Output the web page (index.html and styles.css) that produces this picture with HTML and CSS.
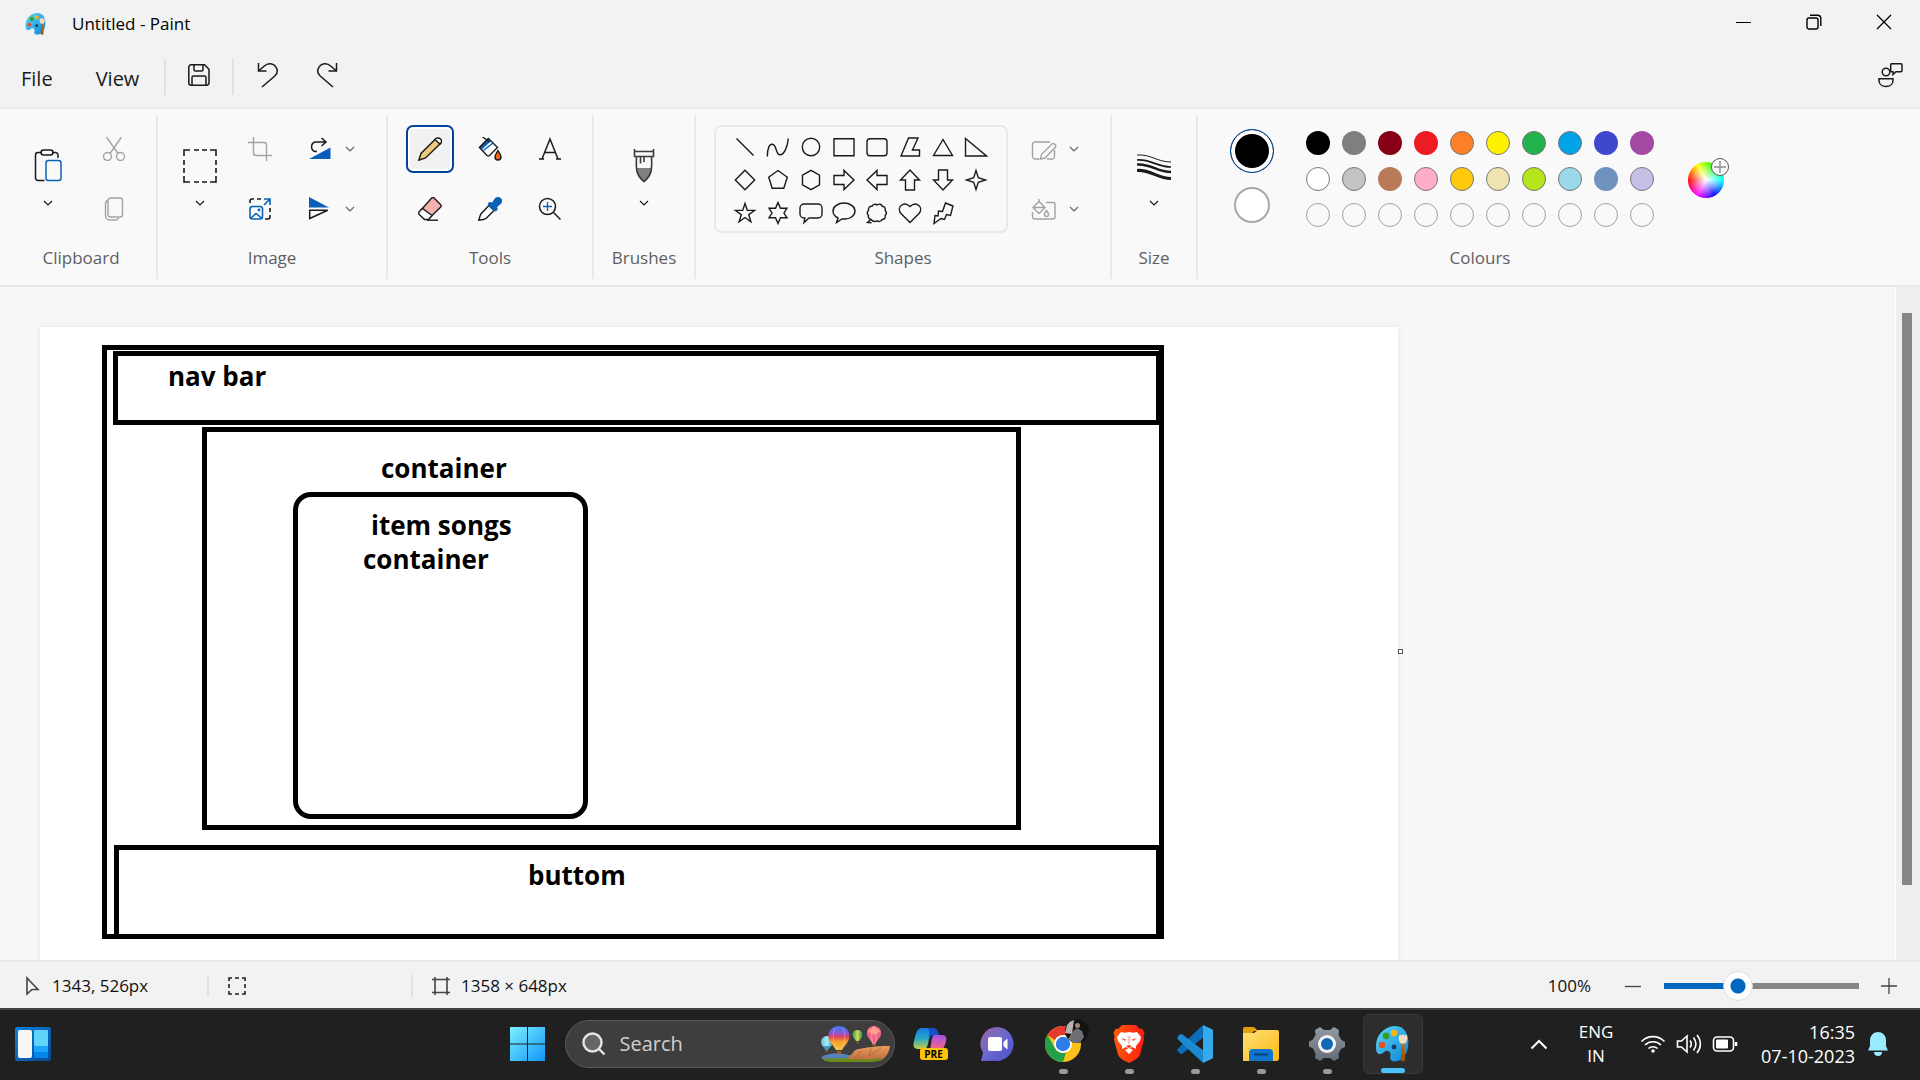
FILE: index.html
```html
<!DOCTYPE html>
<html lang="en-GB">
<head>
<meta charset="utf-8">
<title>Untitled - Paint</title>
<link rel="stylesheet" href="styles.css">
</head>
<body>
<svg class="defs" aria-hidden="true">
  <defs>
    <symbol id="chev" viewBox="0 0 10 8"><path d="M1 2l4 4 4-4" fill="none" stroke="currentColor" stroke-width="1.2"/></symbol>
    <linearGradient id="palBg" x1="0" y1="0" x2="1" y2="1"><stop offset="0" stop-color="#5fd8f8"/><stop offset="1" stop-color="#0a84d8"/></linearGradient>
    <linearGradient id="wood" x1="0" y1="0" x2="0" y2="1"><stop offset="0" stop-color="#c87410"/><stop offset="1" stop-color="#8a4b08"/></linearGradient>
    <symbol id="palette" viewBox="0 0 36 38">
      <path d="M19 1C8 2 1 11 1 21c0 6 1 8 4 8 4 0 4-4 8-3 3 1 3 4 2 6 0 4 3 5 7 4 6-1 10-7 11-14C35 9 29 0 19 1z" fill="url(#palBg)"/>
      <circle cx="19" cy="8" r="3.2" fill="#ffb400"/><circle cx="11" cy="11" r="3.4" fill="#2ea02b"/><circle cx="7" cy="20" r="3.2" fill="#e8501e"/><circle cx="19" cy="22" r="2.4" fill="#0b3b66"/>
      <path d="M26.500 18h3l.7 17c0 2-4.400 2-4.400 0z" fill="url(#wood)"/><path d="M24 11l1-1.500 1.500 1L28 9l1.500 1.500L31 9.500l1 1.500c1 4-1 7-2 7.500h-4c-1-.5-3-3.500-2-7.500z" fill="#f3dcc0"/>
    </symbol>
  </defs>
</svg>
<div class="app">
  <header class="titlebar">
    <svg class="app-icon" width="22" height="24"><use href="#palette"/></svg>
    <h1 class="title">Untitled - Paint</h1>
    <div class="window-controls">
      <button class="win-btn" aria-label="Minimise"><svg width="16" height="16"><path d="M0 8.500h15" stroke="#000"/></svg></button>
      <button class="win-btn" aria-label="Restore"><svg width="16" height="16" fill="none" stroke="#000" stroke-width="1.400"><rect x="1" y="4" width="11" height="11" rx="2"/><path d="M4 1.200h7.500a3.300 3.300 0 0 1 3.300 3.300V12"/></svg></button>
      <button class="win-btn" aria-label="Close"><svg width="16" height="16"><path d="M1 1l14 14M15 1L1 15" stroke="#000" stroke-width="1.300"/></svg></button>
    </div>
  </header>
  <nav class="menubar">
    <button class="menu-btn">File</button>
    <button class="menu-btn">View</button>
    <span class="menu-sep"></span>
    <button class="menu-icon" aria-label="Save"><svg width="24" height="24" fill="none" stroke="#1a1a1a" stroke-width="1.500"><path d="M4 1.800h13.500L22 6.300V20a2.200 2.200 0 0 1-2.200 2.200H4A2.200 2.200 0 0 1 1.800 20V4A2.200 2.200 0 0 1 4 1.800z"/><path d="M7 2v4.500A1.500 1.500 0 0 0 8.500 8h6A1.500 1.500 0 0 0 16 6.500V2M5 22v-7.500A1.500 1.500 0 0 1 6.500 13h11a1.500 1.500 0 0 1 1.500 1.500V22"/></svg></button>
    <span class="menu-sep"></span>
    <button class="menu-icon undo" aria-label="Undo"><svg width="24" height="26" fill="none" stroke="#1a1a1a" stroke-width="1.500"><path d="M2.500 1v8h8M2.500 9L8 4.200c4.500-4 9.500-2.500 11.800.6 2.200 3.200 1.700 6.700-1 9.200L6 25"/></svg></button>
    <button class="menu-icon redo" aria-label="Redo"><svg width="24" height="26" fill="none" stroke="#1a1a1a" stroke-width="1.500"><path d="M21.500 1v8h-8M21.500 9L16 4.200C11.500.2 6.500 1.700 4.200 4.800 2 8 2.500 11.500 5.200 14L18 25"/></svg></button>
    <button class="menu-icon feedback" aria-label="Feedback"><svg width="26" height="26" fill="none" stroke="#1a1a1a" stroke-width="1.500"><circle cx="9" cy="10" r="3.800"/><path d="M2 16.800h14v1.700c0 4-3.500 6-7 6s-7-2-7-6zM14.500 1.800H24a1 1 0 0 1 1 1v6a1 1 0 0 1-1 1h-5l-3 2.700V9.800h-1.500a.8.8 0 0 1-.8-1v-6a1 1 0 0 1 .8-1z"/></svg></button>
  </nav>

  <section class="ribbon" aria-label="Ribbon">
    <div class="group clipboard">
      <div class="group-body">
        <button class="tall" aria-label="Paste"><svg width="32" height="34" fill="none" stroke="#1a1a1a" stroke-width="1.500"><path d="M10 3.500H6A2.500 2.500 0 0 0 3.500 6v22.500A2.500 2.500 0 0 0 6 31.500h6.500M20 3.500h3.500A2.500 2.500 0 0 1 26 6v3"/><rect x="9" y="1" width="12" height="5" rx="2.500"/><rect x="14" y="11.500" width="15" height="20" rx="2.500" stroke="#0a62b8"/></svg><svg class="chev" width="10" height="8"><use href="#chev"/></svg></button>
        <div class="pair">
          <button class="tool dim" aria-label="Cut"><svg width="24" height="24" fill="none" stroke="currentColor" stroke-width="1.400"><circle cx="5.500" cy="19.500" r="4"/><circle cx="18.500" cy="19.500" r="4"/><path d="M4.500 0L16 16.500M19.500 0L8 16.500"/></svg></button>
          <button class="tool dim" aria-label="Copy"><svg width="24" height="24" fill="none" stroke="currentColor" stroke-width="1.400"><rect x="6" y="1" width="14.500" height="19" rx="2.500"/><path d="M6 3.500C4.500 4 3.500 5 3.500 6.500V19a4 4 0 0 0 4 4h6c1.500 0 2.500-.8 3-2"/></svg></button>
        </div>
      </div>
      <h2 class="group-label">Clipboard</h2>
    </div>

    <div class="group image">
      <div class="group-body">
        <button class="tall" aria-label="Select"><svg width="34" height="34" fill="none" stroke="#1a1a1a" stroke-width="1.600"><path d="M1 7V1h6M11 1h5M19 1h5M27 1h6v6M33 11v5M33 19v5M33 27v6h-6M24 33h-5M16 33h-5M7 33H1v-6M1 24v-5M1 16v-5"/></svg><svg class="chev" width="10" height="8"><use href="#chev"/></svg></button>
        <div class="pair">
          <button class="tool dim" aria-label="Crop"><svg width="24" height="24" fill="none" stroke="currentColor" stroke-width="1.400"><path d="M5.500 0v16a2.500 2.500 0 0 0 2.500 2.500h16M0 5.500h16A2.500 2.500 0 0 1 18.500 8v16"/></svg></button>
          <button class="tool" aria-label="Resize"><svg width="24" height="24" fill="none" stroke="#1a1a1a" stroke-width="1.600"><path d="M2 6V4a2 2 0 0 1 2-2h2M9 2h4M22 11v4M22 18v2a2 2 0 0 1-2 2h-3"/><g stroke="#0a62b8"><rect x="2" y="9.500" width="12.500" height="12.500" rx="2.500"/><path d="M3 21l5-4.500 5.500 4.500M16 8l6-6M16 2h6v6"/><circle cx="11" cy="13" r=".6"/></g></svg></button>
        </div>
        <div class="pair split-pair">
          <div class="split"><button class="tool narrow" aria-label="Rotate"><svg width="24" height="24" fill="none"><path d="M1 22h21.500V10.500z" fill="#0a5db8"/><path d="M9 14.500H7A5 5 0 0 1 7 5h10M13.500 1l4.500 4-4.500 4" stroke="#1a1a1a" stroke-width="1.500"/></svg></button><button class="drop" aria-label="Rotate options"><svg width="10" height="8"><use href="#chev"/></svg></button></div>
          <div class="split"><button class="tool narrow" aria-label="Flip"><svg width="24" height="24" fill="none"><path d="M1 0v10.500h20z" fill="#0a5db8"/><path d="M1.700 13.300h18L1.700 21.500z" stroke="#1a1a1a" stroke-width="1.500"/></svg></button><button class="drop" aria-label="Flip options"><svg width="10" height="8"><use href="#chev"/></svg></button></div>
        </div>
      </div>
      <h2 class="group-label">Image</h2>
    </div>

    <div class="group tools">
      <div class="group-body">
        <div class="tool-grid">
          <button class="tool selected" aria-label="Pencil"><svg width="24" height="24" fill="none" stroke="#1a1a1a" stroke-width="1.400"><path d="M.8 23.200L3 16.500 17.500 2l5 4.500L7.500 21z" fill="#efca7c"/><path d="M17 2.500C18.500.5 21 .5 22.500 2s1.500 3.500-.5 5z" fill="#fff"/></svg></button>
          <button class="tool" aria-label="Fill"><svg width="24" height="24" fill="none" stroke="#1a1a1a" stroke-width="1.400"><path d="M10.500 1.500l-9 9 7.500 8a2 2 0 0 0 2.500 0l8-8z" fill="#fff"/><path d="M10.500 1.500l-8.500 9 2 2L13 4z" fill="#0a5db8" stroke="none"/><path d="M5.500 13.500L15 6" stroke="#0a5db8"/><path d="M4.500 0l7.500 5M10.500 1.500l-9 9"/><path d="M20 13.500c1.500 2.500 3 4.500 3 6.500a3 3 0 0 1-6 0c0-2 1.500-4 3-6.500z" fill="#f7630c"/></svg></button>
          <button class="tool" aria-label="Text"><svg width="24" height="24" fill="none" stroke="#1a1a1a" stroke-width="1.500"><path d="M4 22L12 2l8 20M6.500 15.500h11M1 22h5M18 22h5"/></svg></button>
          <button class="tool" aria-label="Eraser"><svg width="24" height="24" fill="none" stroke="#1a1a1a" stroke-width="1.400"><path d="M13.500 1.200a2 2 0 0 1 2.800 0l6.200 6.200a2 2 0 0 1 0 2.800L11 21.500 3 13z" fill="#f6b0ae"/><path d="M4.500 11.500L1.200 14.800a2 2 0 0 0 0 2.600l5.300 5.100h4L14 18.500z" fill="#fff"/><path d="M9 23.200h11"/></svg></button>
          <button class="tool" aria-label="Colour picker"><svg width="24" height="24" fill="none"><path d="M.8 23.200L2 19c.3-1.200.8-2 1.500-2.800L11 8.500l5 5-7.500 7.500c-1 1-2 1.300-3.200 1.500z" fill="#fff" stroke="#1a1a1a" stroke-width="1.400"/><path d="M10 6.500c1-1.500 2.500-2 4-.8.500-1 1.500-2.500 2.500-3.700C18-.3 21-.6 23 1.200s1.300 4.800-.8 6.300c-1 .8-2.300 1.800-3.200 2.400 1 1.200.8 2.700-.3 3.800-1 .8-2 .8-3 0L10.500 9c-.8-.8-1-1.700-.5-2.500z" fill="#0a62b8"/></svg></button>
          <button class="tool" aria-label="Magnifier"><svg width="24" height="24" fill="none" stroke="#1a1a1a" stroke-width="1.500"><circle cx="9.500" cy="9.500" r="8"/><path d="M15.500 15.500l7 7"/><path d="M9.500 5v9M5 9.500h9" stroke="#0a62b8" stroke-width="1.300"/></svg></button>
        </div>
      </div>
      <h2 class="group-label">Tools</h2>
    </div>

    <div class="group brushes">
      <div class="group-body">
        <button class="tall" aria-label="Brushes"><svg width="34" height="34" fill="none" stroke="#3a3a3a" stroke-width="1.600"><path d="M9 19h16c0 7-3 11-8 14-5-3-8-7-8-14z" fill="#808080" stroke="none"/><path d="M7.500 0v7.500h19V0M7.500 2.500h19M9.500 8c-.5 10-1 18 7.500 24.500C25.500 26 25 18 24.500 8M13.500 8v6.500M17 8v5"/></svg><svg class="chev" width="10" height="8"><use href="#chev"/></svg></button>
      </div>
      <h2 class="group-label">Brushes</h2>
    </div>

    <div class="group shapes">
      <div class="group-body">
        <div class="shape-box">
          <button class="shape" aria-label="Line"><svg width="24" height="24"><path d="M3.500 3.500l17 17"/></svg></button>
          <button class="shape" aria-label="Curve"><svg width="24" height="24"><path d="M1.300 21.500C1.300 13 3.500 9 6.500 9.300c4.500.7 3 10.500 7.500 10.500s7.500-8.300 8.300-16.300"/></svg></button>
          <button class="shape" aria-label="Oval"><svg width="24" height="24"><circle cx="12" cy="12" r="8.700"/></svg></button>
          <button class="shape" aria-label="Rectangle"><svg width="24" height="24"><path d="M2 3.700h20v17H2z"/></svg></button>
          <button class="shape" aria-label="Rounded rectangle"><svg width="24" height="24"><rect x="2" y="3.700" width="20" height="17" rx="3"/></svg></button>
          <button class="shape" aria-label="Polygon"><svg width="24" height="24"><path d="M10.500 3H20l-5.500 12h7v6H3z"/></svg></button>
          <button class="shape" aria-label="Triangle"><svg width="24" height="24"><path d="M12 4.500l9.500 16h-19z"/></svg></button>
          <button class="shape" aria-label="Right triangle"><svg width="24" height="24"><path d="M1.500 3.500V21h21z"/></svg></button>
          <button class="shape" aria-label="Diamond"><svg width="24" height="24"><path d="M12 2.300l9.700 9.700-9.700 9.700L2.300 12z"/></svg></button>
          <button class="shape" aria-label="Pentagon"><svg width="24" height="24"><path d="M12 2.500l9.300 6.800-3.500 11H6.200l-3.500-11z"/></svg></button>
          <button class="shape" aria-label="Hexagon"><svg width="24" height="24"><path d="M12 2.300l8.500 4.900v9.600L12 21.700l-8.500-4.900V7.200z"/></svg></button>
          <button class="shape" aria-label="Right arrow"><svg width="24" height="24"><path d="M2 7.500h10V2.500l10 9.500-10 9.500v-5H2z"/></svg></button>
          <button class="shape" aria-label="Left arrow"><svg width="24" height="24"><path d="M22 7.500H12V2.500L2 12l10 9.500v-5h10z"/></svg></button>
          <button class="shape" aria-label="Up arrow"><svg width="24" height="24"><path d="M7.500 22V12H2.500L12 2l9.500 10h-5v10z"/></svg></button>
          <button class="shape" aria-label="Down arrow"><svg width="24" height="24"><path d="M7.500 2v10H2.500L12 22l9.500-10h-5V2z"/></svg></button>
          <button class="shape" aria-label="Four-point star"><svg width="24" height="24"><path d="M12 2.500l2.300 7.200 7.200 2.300-7.200 2.300-2.300 7.200-2.300-7.200L2.500 12l7.200-2.300z"/></svg></button>
          <button class="shape" aria-label="Five-point star"><svg width="24" height="24"><path d="M12 2.500l2.300 6.900h7.200l-5.800 4.300 2.200 7L12 16.500l-5.900 4.200 2.200-7-5.800-4.300h7.200z"/></svg></button>
          <button class="shape" aria-label="Six-point star"><svg width="24" height="24"><path d="M12 1.500l2.500 5.700h6.500L18 12l3 4.800h-6.500L12 22.500l-2.500-5.700H3L6 12 3 7.200h6.500z"/></svg></button>
          <button class="shape" aria-label="Rounded callout"><svg width="24" height="24"><path d="M5 3h14a4 4 0 0 1 4 4v6a4 4 0 0 1-4 4h-9l-5 4.500.8-4.500H5a4 4 0 0 1-4-4V7a4 4 0 0 1 4-4z"/></svg></button>
          <button class="shape" aria-label="Oval callout"><svg width="24" height="24"><path d="M12 2c6 0 11 3.500 11 8s-5 8-10 8h-3l-5.500 3.500 1.500-4.500C3 15.500 1 13 1 10c0-4.500 5-8 11-8z"/></svg></button>
          <button class="shape" aria-label="Cloud callout"><svg width="24" height="24"><path d="M6 18.500C3.500 18 3 16 3.500 14.500 2 13 2 11 3.500 9.500 3 7 4.500 5 7 5.200 8 3 10.500 2.800 12 4c2-1.500 4.500-1 5.200 1.200 2.500.2 3.500 2.300 3 4.300 1.500 1.500 1.500 3.500 0 5 .5 2.500-1 4.200-3.200 4-1 2-3.500 2.500-5 1.200-1.700 1.200-4 1-6-1.200zM6 18.500l-3.500 3 4 .2"/></svg></button>
          <button class="shape" aria-label="Heart"><svg width="24" height="24"><path d="M12 21.500L3 12.500c-5-6 2.500-13 9-7 6.500-6 14 1 9 7z"/></svg></button>
          <button class="shape" aria-label="Lightning"><svg width="24" height="24"><path d="M14.500 2l7.500 3-2.500 9.500-4-1-2 5-3.500-1L3 22.500l1-8 3 .5.500-5 4 .5z"/></svg></button>
        </div>
        <div class="pair split-pair">
          <div class="split dim"><button class="tool narrow" aria-label="Outline"><svg width="26" height="22" fill="none" stroke="currentColor" stroke-width="1.400"><path d="M19 4H4a2.500 2.500 0 0 0-2.500 2.500v12A2.500 2.500 0 0 0 4 21h4.500M23.500 12v6.500A2.500 2.500 0 0 1 21 21h-5"/><path d="M9.500 21l1-4.500L20.500 6.500a2.300 2.300 0 0 1 3.500 3.300L14 20z"/></svg></button><button class="drop" aria-label="Outline options"><svg width="10" height="8"><use href="#chev"/></svg></button></div>
          <div class="split dim"><button class="tool narrow" aria-label="Shape fill"><svg width="26" height="22" fill="none" stroke="currentColor" stroke-width="1.400"><path d="M15 4.500h7a2 2 0 0 1 2 2v12.500a2 2 0 0 1-2 2H3.500a2 2 0 0 1-2-2V14"/><path d="M8 3.500l6 6-6 6-6-6zM3 9.500h10M8 1v4"/><path d="M15.500 12.500c1.500 2 2 3 2 4a2 2 0 0 1-4 0c0-1 .5-2 2-4z"/></svg></button><button class="drop" aria-label="Fill options"><svg width="10" height="8"><use href="#chev"/></svg></button></div>
        </div>
      </div>
      <h2 class="group-label">Shapes</h2>
    </div>

    <div class="group size">
      <div class="group-body">
        <button class="tall" aria-label="Size"><svg width="34" height="34" fill="none" stroke="#1a1a1a"><path d="M0 6c14-1 20 7 34 7" stroke-width="1"/><path d="M0 11c14-1 20 7 34 7" stroke-width="1.700"/><path d="M0 15.500c14-1 20 7.500 34 7.500" stroke-width="2.400"/><path d="M0 21.500c14-1 20 8 34 8" stroke-width="3.200"/></svg><svg class="chev" width="10" height="8"><use href="#chev"/></svg></button>
      </div>
      <h2 class="group-label">Size</h2>
    </div>

    <div class="group colours">
      <div class="group-body">
        <div class="active-colours">
          <button class="primary" aria-label="Colour 1"></button>
          <button class="secondary" aria-label="Colour 2"></button>
        </div>
        <div class="swatches">
          <button class="swatch c-black" aria-label="Black"></button>
          <button class="swatch c-grey" aria-label="Grey"></button>
          <button class="swatch c-darkred" aria-label="Dark red"></button>
          <button class="swatch c-red" aria-label="Red"></button>
          <button class="swatch ring c-orange" aria-label="Orange"></button>
          <button class="swatch ring c-yellow" aria-label="Yellow"></button>
          <button class="swatch ring c-green" aria-label="Green"></button>
          <button class="swatch ring c-turquoise" aria-label="Turquoise"></button>
          <button class="swatch c-indigo" aria-label="Indigo"></button>
          <button class="swatch c-purple" aria-label="Purple"></button>
          <button class="swatch ring c-white" aria-label="White"></button>
          <button class="swatch ring c-lightgrey" aria-label="Light grey"></button>
          <button class="swatch c-brown" aria-label="Brown"></button>
          <button class="swatch ring c-rose" aria-label="Rose"></button>
          <button class="swatch ring c-gold" aria-label="Gold"></button>
          <button class="swatch ring c-sand" aria-label="Light yellow"></button>
          <button class="swatch ring c-lime" aria-label="Lime"></button>
          <button class="swatch ring c-sky" aria-label="Light turquoise"></button>
          <button class="swatch c-bluegrey" aria-label="Blue grey"></button>
          <button class="swatch ring c-lavender" aria-label="Lavender"></button>
          <button class="swatch empty" aria-label="Custom 1"></button>
          <button class="swatch empty" aria-label="Custom 2"></button>
          <button class="swatch empty" aria-label="Custom 3"></button>
          <button class="swatch empty" aria-label="Custom 4"></button>
          <button class="swatch empty" aria-label="Custom 5"></button>
          <button class="swatch empty" aria-label="Custom 6"></button>
          <button class="swatch empty" aria-label="Custom 7"></button>
          <button class="swatch empty" aria-label="Custom 8"></button>
          <button class="swatch empty" aria-label="Custom 9"></button>
          <button class="swatch empty" aria-label="Custom 10"></button>
        </div>
        <button class="wheel" aria-label="Edit colours"><svg class="wheel-plus" width="20" height="20" fill="none"><circle cx="10" cy="10" r="8.500" fill="#f9f9f9" stroke="#5a5a5a"/><path d="M10 4v12M4 10h12" stroke="#8a8a8a" stroke-width="1.400"/></svg></button>
      </div>
      <h2 class="group-label">Colours</h2>
    </div>
  </section>

  <main class="workspace">
    <div class="viewport">
      <div class="canvas">
        <div class="box outer"></div>
        <div class="box nav"></div>
        <div class="box middle"></div>
        <div class="box item"></div>
        <div class="box footer"></div>
        <p class="note n-nav">nav bar</p>
        <p class="note n-container">container</p>
        <p class="note n-item">item songs</p>
        <p class="note n-item2">container</p>
        <p class="note n-bottom">buttom</p>
        <span class="handle"></span>
      </div>
    </div>
    <div class="scrollbar"><div class="thumb"></div></div>
  </main>

  <footer class="status">
    <div class="stat pointer"><svg width="16" height="20" fill="none" stroke="#444" stroke-width="1.600"><path d="M2 2v16l5-4.500h6z"/></svg><span>1343, 526px</span></div>
    <div class="stat selection"><svg width="18" height="20" fill="none" stroke="#222" stroke-width="1.600"><path d="M1 5V2h3M7 2h4M14 2h3v3M17 8v4M17 15v3h-3M11 18H7M4 18H1v-3M1 12V8"/></svg></div>
    <div class="stat dims"><svg width="18" height="20" fill="none" stroke="#444" stroke-width="1.600"><path d="M0 3.500h18M0 16.500h18M3 1v18M15 1v18"/></svg><span>1358 × 648px</span></div>
    <div class="zoom">
      <label for="zoom-range">100%</label>
      <button class="zoom-btn" aria-label="Zoom out"><svg width="18" height="18"><path d="M1 9.500h16" stroke="#444" stroke-width="1.300"/></svg></button>
      <input id="zoom-range" class="range" type="range" min="0" max="100" value="36">
      <button class="zoom-btn" aria-label="Zoom in"><svg width="18" height="18"><path d="M1 9h16M9 1v16" stroke="#444" stroke-width="1.300"/></svg></button>
    </div>
  </footer>
</div>

<div class="taskbar">
  <button class="widgets" aria-label="Widgets"><svg width="36" height="34"><defs><linearGradient id="wg" x1="0" y1="0" x2="1" y2="1"><stop offset="0" stop-color="#0a80da"/><stop offset="1" stop-color="#064a94"/></linearGradient></defs><rect width="36" height="34" rx="2" fill="url(#wg)"/><rect x="3" y="3" width="14" height="28" rx="2" fill="#f7f7f7"/><rect x="19" y="3" width="14" height="16" rx="1" fill="#62d3fb"/><path d="M19 19h14v6H19z" fill="#1da6f8"/><path d="M19 25h14v6H19z" fill="#0284e8"/></svg></button>
  <div class="task-center">
    <button class="task" aria-label="Start"><svg width="36" height="36"><defs><linearGradient id="st" gradientUnits="userSpaceOnUse" x1="0" y1="0" x2="36" y2="36"><stop offset="0" stop-color="#7cf1fd"/><stop offset="1" stop-color="#0f93fb"/></linearGradient></defs><path d="M0 1h17v16.500H0zM18 1h17v16.500H18zM0 18.500h17V35H0zM18 18.500h17V35H18z" fill="url(#st)"/></svg></button>
    <label class="search">
      <svg width="24" height="24" fill="none" stroke="#e2e4e8" stroke-width="2.400"><circle cx="10.500" cy="10.500" r="9" fill="#666"/><path d="M17 17l5.500 5.500"/></svg>
      <input class="search-input" type="text" placeholder="Search" aria-label="Search">
      <svg class="balloons" width="70" height="38">
        <defs>
          <linearGradient id="b1" x1="0" y1="0" x2="0" y2="1"><stop offset="0" stop-color="#3a78e8"/><stop offset=".3" stop-color="#8a58d8"/><stop offset=".45" stop-color="#e0405c"/><stop offset=".65" stop-color="#f5a02c"/><stop offset="1" stop-color="#f7c244"/></linearGradient>
          <linearGradient id="b2" x1="0" y1="0" x2="1" y2="0"><stop offset="0" stop-color="#59c3e4"/><stop offset=".5" stop-color="#b4ecf2"/><stop offset="1" stop-color="#2d90be"/></linearGradient>
          <linearGradient id="b3" x1="0" y1="0" x2="1" y2="0"><stop offset="0" stop-color="#38a048"/><stop offset=".5" stop-color="#d4d858"/><stop offset="1" stop-color="#2f9448"/></linearGradient>
          <linearGradient id="rock" x1="0" y1="0" x2="0" y2="1"><stop offset="0" stop-color="#eba05c"/><stop offset="1" stop-color="#b8683c"/></linearGradient>
        </defs>
        <path d="M0 32c10-5 20-5 34 0l-4 4H4z" fill="#5580b8"/>
        <path d="M24 34c8-3 8-10 14-10 8-1 12-3 31-3-1 7-4 12-10 15z" fill="url(#rock)"/>
        <path d="M50 24l-2 7 12-8M40 26l-6 7" stroke="#b46a3c" fill="none"/>
        <path d="M1 33c10 2 20-1 30 1 10 1 20 0 31-1-4 3-7 4-13 4H12C6 37 3 36 1 33z" fill="#6c8c18"/>
        <ellipse cx="6" cy="17" rx="6" ry="6" fill="url(#b2)"/><path d="M2 21l3 5h1l4-5z" fill="#3b9cc6"/><path d="M4.500 25h2v2h-2z" fill="#8c5a28"/>
        <path d="M18 1c7 0 11 5 10.500 11C28 17 23 21 21 25h-6C13 21 8 17 7.500 12 7 6 11 1 18 1z" fill="url(#b1)"/><path d="M14 3c-3 8-2 16 2 22M22 3c3 8 2 16-2 22" stroke="#ffffff44" fill="none"/><path d="M16 26h4v3h-4z" fill="#a06024"/>
        <path d="M36.500 5c4 0 5.500 3 4.800 6-.5 2-2.300 3-3.300 5h-3c-1-2-2.800-3-3.300-5-.7-3 .8-6 4.800-6z" fill="url(#b3)"/><path d="M35.500 16.500h2v2h-2z" fill="#8c5a28"/>
        <path d="M53 1c5 0 7.500 4 7 8-.5 4-4 6-5.500 10h-3C50 15 46.500 13 46 9c-.5-4 2-8 7-8z" fill="#f2668c"/><path d="M46.500 6l6.500-4 6.500 4-6.500 4z" fill="#ff9a80"/><path d="M53 1c-3 4-3 12-1 18M53 1c3 4 3 12 1 18" stroke="#ffc0b088" fill="none"/><path d="M51.500 19h3v2h-3z" fill="#a06024"/>
      </svg>
    </label>
    <button class="task" aria-label="Copilot preview"><span class="copilot"><svg width="36" height="34"><defs><linearGradient id="c1" x1="0" y1="0" x2="0" y2="1"><stop offset="0" stop-color="#1a78e0"/><stop offset=".5" stop-color="#24a8c8"/><stop offset="1" stop-color="#c8d040"/></linearGradient><linearGradient id="c2" x1="0" y1="0" x2="0" y2="1"><stop offset="0" stop-color="#a050e8"/><stop offset="1" stop-color="#ff6878"/></linearGradient></defs><path d="M9 1h13c-4 1-5 5-6 10-1 8-2 11-6 11H5c-5 0-5-4-4-8C3 6 4 1 9 1z" fill="url(#c1)"/><path d="M15 1h5c4 0 5 3 6 7h-5c-3 0-4 2-5 5 0-5 1-9-1-12z" fill="#1650c8"/><path d="M21 8h8c4 0 5 3 4 6-1 5-3 9-6 9H17l1-6c1-5 1-8 3-9z" fill="url(#c2)"/></svg><span class="pre">PRE</span></span></button>
    <button class="task" aria-label="Chat"><svg width="34" height="36"><defs><linearGradient id="ch" x1="0" y1="0" x2="1" y2="1"><stop offset="0" stop-color="#9a6a9c"/><stop offset=".5" stop-color="#6a68d0"/><stop offset="1" stop-color="#4a50c8"/></linearGradient></defs><path d="M17 1a17 17 0 1 1-3 33.800L1 35l2-8A17 17 0 0 1 17 1z" fill="url(#ch)"/><rect x="8" y="11" width="14" height="14" rx="2" fill="#fff"/><path d="M23.500 16l4-3.500v11l-4-3.500z" fill="#fff"/></svg></button>
    <button class="task open" aria-label="Chrome"><span class="chrome"><svg width="36" height="36" viewBox="0 0 36 36"><circle cx="18" cy="18" r="18" fill="#fbc116"/><path d="M2.400 9A18 18 0 0 1 33.600 9H18a9 9 0 0 0-8 5z" fill="#e33b2e"/><path d="M2.400 9l7.800 13.500A9 9 0 0 0 21 26.500L18 36A18 18 0 0 1 2.400 9z" fill="#25a046"/><circle cx="18" cy="18" r="9" fill="#fff"/><circle cx="18" cy="18" r="7.200" fill="#2f7de8"/></svg><svg class="avatar" width="24" height="24"><circle cx="12" cy="12" r="12" fill="#151213"/><path d="M2 6a12 12 0 0 1 7-5L7 15 0 14z" fill="#b9b2b2"/><path d="M8 12l4-3 5 3 2 6-4 5.500A12 12 0 0 1 3 20z" fill="#6e7076"/><circle cx="12.500" cy="6.500" r="2.500" fill="#a98474"/></svg></span></button>
    <button class="task open" aria-label="Brave"><svg width="32" height="38"><defs><linearGradient id="br" x1="0" y1="0" x2="1" y2="0"><stop offset="0" stop-color="#ff5a0a"/><stop offset="1" stop-color="#ff1c14"/></linearGradient></defs><path d="M9 0h14l4 4 2-.5 2.500 4-1 4 .5 3-4 15c-1 4-8 7-11 8.500C13 36.500 6 33.500 5 29.500L1 14.500l.5-3-1-4L3 3.500 5 4z" fill="url(#br)"/><path d="M8 7l4 .8L16 7l4 .8L24 7l4 5-1 4-4 5v3l-4-2-3 1.500L13 22l-4 2v-3l-4-5-1-4z" fill="#fff"/><path d="M8 13l5 1.500-1 1.500zM24 13l-5 1.500 1 1.500zM13 21l3-1 3 1-3 2z" fill="#ff3c10"/><path d="M14.500 11h3l-.5 8h-2z" fill="#ff3c10" opacity=".3"/><path d="M12 25l4-2 4 2-4 4z" fill="#fff"/></svg></button>
    <button class="task open" aria-label="Visual Studio Code"><svg width="36" height="38"><path d="M26 0L1 23.500c-1 1-1 2 0 3L3 28.500c1 .8 1.500.8 2.500 0L27 12z" fill="#0d6db8"/><path d="M26 38L1 14.500c-1-1-1-2 0-3L3 9.500c1-.8 1.500-.8 2.500 0L27 26z" fill="#1a8ad2"/><path d="M26 0l8.500 4c1 .5 1.500 1 1.500 2v26c0 1-.5 1.500-1.500 2L26 38z" fill="#35a8ee"/></svg></button>
    <button class="task open" aria-label="File Explorer"><svg width="36" height="36"><defs><linearGradient id="fo" x1="0" y1="0" x2="1" y2="1"><stop offset="0" stop-color="#ffe078"/><stop offset="1" stop-color="#fbb914"/></linearGradient></defs><path d="M0 3a2 2 0 0 1 2-2h9l4 4h-4l-3 3H0z" fill="#e0a008"/><path d="M0 7h11l4-3h19a2 2 0 0 1 2 2v26a3 3 0 0 1-3 3H0z" fill="url(#fo)"/><path d="M6 35V27a4 4 0 0 1 4-4h16a4 4 0 0 1 4 4v8z" fill="#0f74cc"/><path d="M11 28.500h14" stroke="#06427e" stroke-width="2"/></svg></button>
    <button class="task open" aria-label="Settings"><svg width="36" height="36"><defs><linearGradient id="se" x1="0" y1="0" x2="0" y2="1"><stop offset="0" stop-color="#929aa3"/><stop offset="1" stop-color="#646c76"/></linearGradient></defs><path d="M11 1l4 3h6l4-3 5 3-.5 5 3 5 3.500 2v5l-4 2-2.500 4.500.5 4.500-5 3-4-3h-6l-4 3-5-3 .5-4.500L4 22.500l-4-2v-5l3.500-1.500 3-5L6 4z" fill="url(#se)"/><circle cx="18" cy="18" r="9" fill="#f2f2f2"/><circle cx="18" cy="18" r="6" fill="#1068b8"/></svg></button>
    <button class="task active" aria-label="Paint"><svg width="36" height="38"><use href="#palette"/></svg></button>
  </div>
  <div class="tray">
    <button class="tray-btn up" aria-label="Show hidden icons"><svg width="18" height="12" fill="none"><path d="M1.500 10.500L9 3l7.500 7.500" stroke="#fff" stroke-width="2"/></svg></button>
    <button class="tray-btn lang">ENG<br>IN</button>
    <button class="tray-btn system" aria-label="Network, sound, battery">
      <svg width="26" height="20" fill="none" stroke="#fff" stroke-width="1.600"><path d="M1.500 7.500a16 16 0 0 1 23 0M5 11a11.500 11.500 0 0 1 16 0M8.500 14.500a6.500 6.500 0 0 1 9 0"/><circle cx="13" cy="17" r="1.800" fill="#fff" stroke="none"/></svg>
      <svg width="26" height="22" fill="none" stroke="#fff" stroke-width="1.600"><path d="M1.500 8h4l5.500-5v16l-5.500-5h-4zM14 7.500c1.500 2 1.500 5 0 7M17.500 4.500c3 4 3 9 0 13M21 2c4.500 5.500 4.500 12.500 0 18"/></svg>
      <svg width="26" height="18" fill="none" stroke="#fff" stroke-width="1.600"><rect x="1.500" y="2" width="20" height="14" rx="3.500"/><rect x="4" y="4.500" width="12" height="9" rx="1" fill="#fff" stroke="none"/><path d="M24 7v4" stroke-width="2.500"/></svg>
    </button>
    <button class="tray-btn clock">16:35<br>07-10-2023</button>
    <button class="tray-btn bell" aria-label="Notifications"><svg width="20" height="24"><path d="M10 0a8 8 0 0 1 8 8v6l2 4.500H0L2 14V8a8 8 0 0 1 8-8zM6 20h8a4 4 0 0 1-8 0z" fill="#99ebff"/></svg></button>
  </div>
</div>
</body>
</html>
```
FILE: styles.css
```css
* { box-sizing: border-box; }

html, body { height: 100%; }

body {
  margin: 0;
  display: flex;
  flex-direction: column;
  overflow: hidden;
  font: 17px/24px "Open Sans", "Noto Sans", sans-serif;
  color: #1a1a1a;
  background: #f2f2f2;
}

button {
  margin: 0;
  padding: 0;
  border: 0;
  background: none;
  font: inherit;
  color: inherit;
}

svg { display: block; flex: none; }
.defs { position: absolute; width: 0; height: 0; }
h1, h2, p { margin: 0; font-weight: 400; }

.app {
  flex: 1;
  min-height: 0;
  display: flex;
  flex-direction: column;
}

/* Title bar */
.titlebar {
  flex: none;
  height: 48px;
  display: flex;
  align-items: center;
  padding: 0 1px 0 25px;
}
.title { margin-left: 25px; font-size: 17px; color: #000; }
.window-controls { margin-left: auto; align-self: flex-start; display: flex; }
.win-btn {
  width: 70px;
  height: 43px;
  display: flex;
  align-items: center;
  justify-content: center;
}

/* Menu bar */
.menubar {
  flex: none;
  height: 61px;
  display: flex;
  align-items: center;
  padding: 0 17px 6px 21px;
  border-bottom: 2px solid #e9e9e9;
}
.menu-btn { margin: 8px 43px 0 0; font-size: 20px; }
.menu-btn + .menu-sep { margin-left: -18px; }
.menu-sep { width: 2px; height: 36px; margin-top: 4px; background: #e1e1e1; }
.menu-icon { width: 66px; display: flex; justify-content: center; }
.menu-icon.undo { width: 68px; }
.menu-icon.redo { width: 50px; }
.menu-icon.feedback { width: 26px; margin-left: auto; }

/* Ribbon */
.ribbon {
  flex: none;
  display: flex;
  padding: 6px 0;
  background: #f9f9f9;
  border-bottom: 2px solid #e9e9e9;
}
.group {
  padding: 4px 0 2px;
  border-right: 2px solid #e9e9e9;
}
.group-body { height: 120px; display: flex; }
.group-label {
  font-size: 17px;
  line-height: 38px;
  text-align: center;
  color: #5f5f5f;
}
.clipboard { width: 158px; }
.clipboard .group-body { padding-left: 18px; gap: 6px; }
.clipboard .group-label { padding-left: 6px; }
.image { width: 230px; }
.image .group-body { padding-left: 12px; }
.tools { width: 206px; }
.tools .group-body { justify-content: center; }
.brushes { width: 102px; }
.brushes .group-body { justify-content: center; }
.shapes { width: 416px; }
.shapes .group-body { padding-left: 18px; }
.size { width: 86px; }
.size .group-body { justify-content: center; }
.colours { width: 564px; border-right: 0; }
.colours .group-body { padding-left: 30px; align-items: center; }

.tall {
  width: 60px;
  display: flex;
  flex-direction: column;
  align-items: center;
  gap: 16px;
  padding-top: 30px;
}
.pair { width: 60px; }
.split-pair { margin-left: 10px; }
.split { display: flex; }
.tool {
  width: 60px;
  height: 60px;
  display: flex;
  align-items: center;
  justify-content: center;
}
.narrow { width: 40px; }
.drop { width: 20px; display: flex; align-items: center; justify-content: center; color: #666; }
.dim { color: #a3a3a3; }
.tool-grid { display: grid; grid-template-columns: repeat(3, 60px); }
.tool.selected {
  width: 48px;
  height: 48px;
  margin: 6px;
  border: 2px solid #00459a;
  border-radius: 7px;
  background: #f1f1f1;
  box-shadow: inset 0 0 0 2px #fff;
}

.shape-box {
  width: 294px;
  height: 108px;
  margin-top: 6px;
  padding: 3px 12px;
  display: grid;
  grid-template-columns: repeat(8, 33px);
  grid-auto-rows: 33px;
  border: 2px solid #e9e9e9;
  border-radius: 7px;
}
.shape { display: flex; align-items: center; justify-content: center; }
.shape svg { fill: none; stroke: #1a1a1a; stroke-width: 1.4; }
.shapes .split-pair { margin-left: 16px; }

.active-colours {
  width: 48px;
  display: flex;
  flex-direction: column;
  align-items: center;
  gap: 14px;
  padding-bottom: 6px;
}
.primary {
  width: 44px;
  height: 44px;
  border: 1px solid #00459a;
  border-radius: 50%;
  background: #000;
  box-shadow: inset 0 0 0 4px #fff;
}
.secondary {
  width: 36px;
  height: 36px;
  border: 2px solid #a8a8a8;
  border-radius: 50%;
  background: #fff;
}
.swatches {
  margin-left: 24px;
  display: grid;
  grid-template-columns: repeat(10, 36px);
  grid-auto-rows: 36px;
  place-items: center;
}
.swatch { width: 24px; height: 24px; border-radius: 50%; }
.ring { border: 1px solid #777; }
.empty { border: 1px solid #a0a0a0; }
.c-black { background: #000; }
.c-grey { background: #7f7f7f; }
.c-darkred { background: #880015; }
.c-red { background: #ed1c24; }
.c-orange { background: #ff7f27; }
.c-yellow { background: #fff200; }
.c-green { background: #22b14c; }
.c-turquoise { background: #00a2e8; }
.c-indigo { background: #3f48cc; }
.c-purple { background: #a349a4; }
.c-white { background: #fff; }
.c-lightgrey { background: #c3c3c3; }
.c-brown { background: #b97a57; }
.c-rose { background: #ffaec9; }
.c-gold { background: #ffc90e; }
.c-sand { background: #efe4b0; }
.c-lime { background: #b5e61d; }
.c-sky { background: #99d9ea; }
.c-bluegrey { background: #7092be; }
.c-lavender { background: #c8bfe7; }
.wheel {
  position: relative;
  width: 36px;
  height: 36px;
  margin: 2px 0 0 28px;
  border-radius: 50%;
  background: radial-gradient(circle closest-side, #fff, #fff0), conic-gradient(from 270deg, #f00, #ff0, #0f0, #0ff, #00f, #f0f, #f00);
}
.wheel-plus { position: absolute; top: -5px; right: -6px; }

/* Drawing area */
.workspace { flex: 1; min-height: 0; display: flex; background: #f7f7f7; }
.viewport { flex: 1; min-width: 0; overflow: hidden; padding: 40px 0 0 40px; }
.canvas {
  position: relative;
  width: 1358px;
  height: 648px;
  background: #fff;
  box-shadow: 0 0 5px #e3e3e3;
}
.box { position: absolute; border: 5px solid #000; }
.outer { left: 62px; top: 18px; width: 1062px; height: 594px; }
.nav { left: 73px; top: 24px; width: 1048px; height: 74px; }
.middle { left: 162px; top: 100px; width: 819px; height: 403px; }
.item { left: 253px; top: 165px; width: 295px; height: 327px; border-radius: 18px; }
.footer { left: 74px; top: 518px; width: 1047px; height: 94px; }
.note {
  position: absolute;
  font-size: 26px;
  line-height: 34px;
  font-weight: 700;
  color: #000;
  white-space: nowrap;
}
.n-nav { left: 128px; top: 32px; }
.n-container { left: 341px; top: 124px; }
.n-item { left: 331px; top: 181px; }
.n-item2 { left: 323px; top: 215px; }
.n-bottom { left: 488px; top: 531px; }
.handle { position: absolute; left: 1358px; top: 322px; width: 5px; height: 5px; border: 1px solid #555; background: #fff; }
.scrollbar { width: 25px; padding: 26px 8px 75px 6px; border-left: 1px solid #fff; background: #efefef; }
.thumb { height: 100%; background: #868686; }

/* Status bar */
.status {
  flex: none;
  height: 48px;
  display: flex;
  align-items: center;
  padding: 2px 22px 0 25px;
  border-top: 2px solid #e9e9e9;
  color: #111;
}
.stat { height: 22px; display: flex; align-items: center; gap: 11px; }
.pointer { width: 184px; border-right: 2px solid #e1e1e1; }
.selection { width: 204px; padding-left: 19px; border-right: 2px solid #e1e1e1; }
.dims { padding-left: 19px; }
.zoom { margin-left: auto; display: flex; align-items: center; }
.zoom label { margin-right: 33px; }
.zoom-btn { width: 18px; }
.range {
  appearance: none;
  width: 195px;
  height: 32px;
  margin: 0 21px 0 22px;
  background: linear-gradient(90deg, #0067c0 38%, #868686 38%) center / 100% 6px no-repeat;
}
.range::-webkit-slider-thumb {
  appearance: none;
  width: 30px;
  height: 30px;
  border: 1px solid #ddd;
  border-radius: 50%;
  background: radial-gradient(circle, #0067c0 7px, #fff 8px);
}

/* Taskbar */
.taskbar {
  flex: none;
  height: 72px;
  display: grid;
  grid-template-columns: 1fr auto 1fr;
  align-items: center;
  padding-bottom: 2px;
  background: #202020;
  border-top: 2px solid #434343;
  color: #fff;
}
.widgets { justify-self: start; margin-left: 15px; }
.task-center { display: flex; align-items: center; }
.task {
  position: relative;
  width: 60px;
  height: 60px;
  margin: 0 3px;
  display: flex;
  align-items: center;
  justify-content: center;
}
.task.open::after, .task.active::after {
  content: "";
  position: absolute;
  bottom: 0;
  left: 50%;
  width: 9px;
  height: 5px;
  margin-left: -4px;
  border-radius: 3px;
  background: #9a9a9a;
}
.task.active { background: #2d2d2d; border: 1px solid #383838; border-radius: 6px; }
.task.active::after { width: 24px; margin-left: -12px; background: #4cc2ff; }
.search {
  width: 330px;
  height: 48px;
  margin: 0 3px 0 4px;
  display: flex;
  align-items: center;
  padding: 0 3px 0 16px;
  border: 1px solid #5a5a5a;
  border-radius: 24px;
  background: #3e3e3e;
}
.search-input {
  flex: 1;
  min-width: 0;
  margin-left: 14px;
  padding: 0;
  border: 0;
  background: none;
  font: inherit;
  font-size: 20px;
  color: #d0d0d0;
}
.search-input::placeholder { color: #d0d0d0; opacity: 1; }
.copilot, .chrome { position: relative; display: block; }
.pre {
  position: absolute;
  left: 7px;
  top: 21px;
  width: 28px;
  height: 12px;
  border-radius: 3px;
  background: #fdc30a;
  color: #000;
  font-size: 10px;
  line-height: 12px;
  font-weight: 700;
  text-align: center;
}
.avatar { position: absolute; left: 20px; top: -7px; }
.tray { justify-self: end; display: flex; align-items: center; padding-right: 32px; }
.tray-btn { line-height: 24px; }
.lang { width: 60px; margin-left: 18px; text-align: center; }
.system { display: flex; align-items: center; gap: 10px; margin-left: 14px; }
.clock { width: 100px; margin-left: 17px; text-align: right; font-size: 18px; }
.bell { margin-left: 13px; }
```
